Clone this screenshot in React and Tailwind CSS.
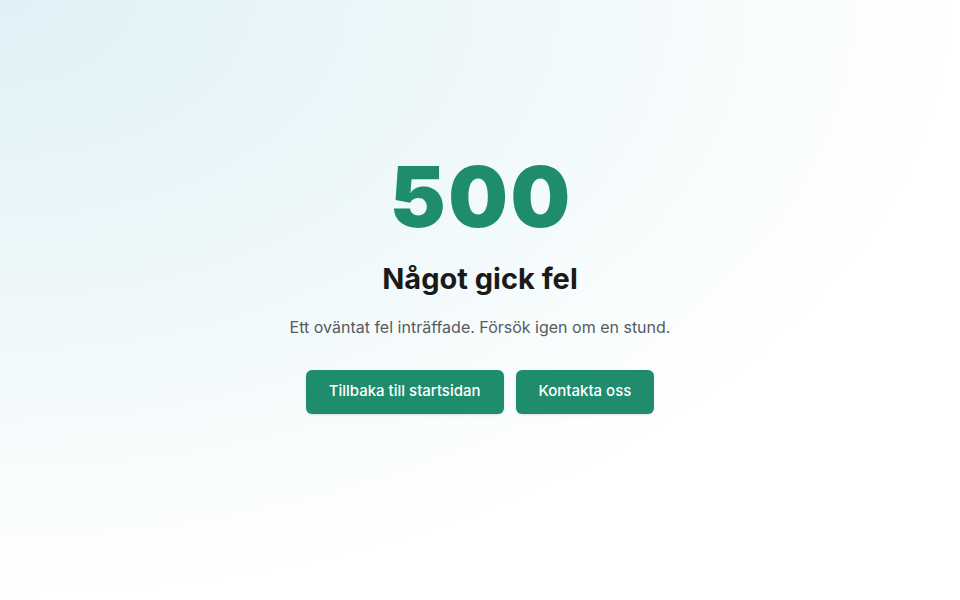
import React from 'react';

const App = () => {
  return (
    <div
      className="min-h-screen flex items-center justify-center bg-[radial-gradient(ellipse_at_top_left,#dff1f7_0%,#eef8fa_35%,#ffffff_70%)] px-4"
      style={{ fontFamily: 'Inter, "Noto Sans", sans-serif' }}
    >
      <div className="text-center -mt-8">
        {/* Error code */}
        <h1 className="text-[84px] leading-none font-black text-[#1f8c6e] tracking-[0.03em] pl-[0.03em]">500</h1>
        <h2 className="mt-[22px] text-[29px] leading-9 font-bold text-[#1a1a1a]">Något gick fel</h2>
        <p className="mt-[18px] text-base leading-6 text-[#555b61]">
          Ett oväntat fel inträffade. Försök igen om en stund.
        </p>

        {/* Actions */}
        <div className="mt-[31px] flex items-center justify-center gap-3">
          <a
            href="/"
            className="inline-flex items-center h-11 px-[23px] rounded-md bg-[#1f8c6e] text-white text-[15px] font-medium shadow-sm"
          >
            Tillbaka till startsidan
          </a>
          <a
            href="/kontakt"
            className="inline-flex items-center h-11 px-[23px] rounded-md bg-[#1f8c6e] text-white text-[15px] font-medium shadow-sm"
          >
            Kontakta oss
          </a>
        </div>
      </div>
    </div>
  );
};

export default App;
